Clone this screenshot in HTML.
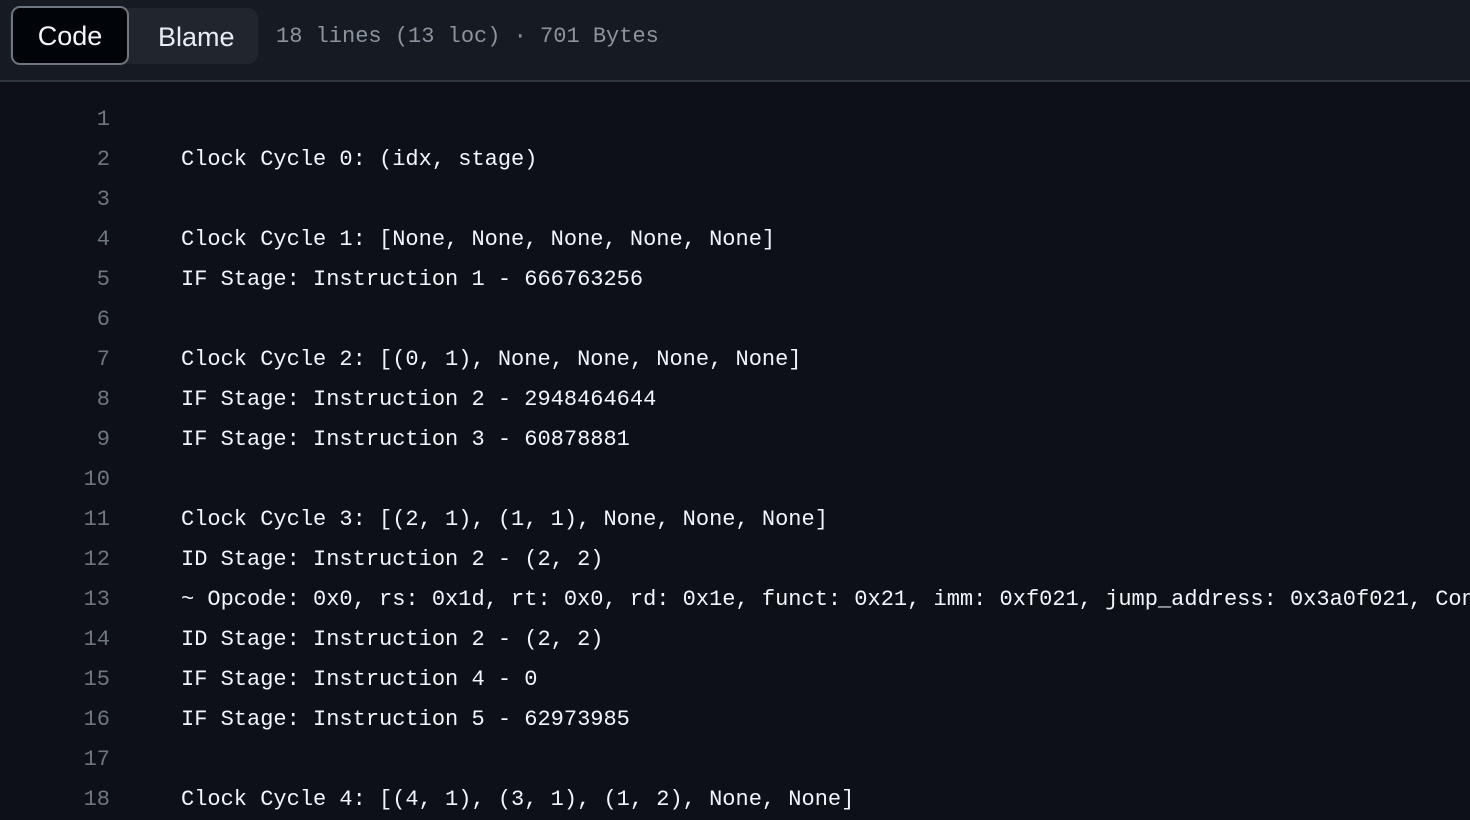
<!DOCTYPE html>
<html><head><style>
html,body{margin:0;padding:0;width:1470px;height:820px;overflow:hidden;background:#0d1117;}
.hdr{position:absolute;left:0;top:0;width:1470px;height:80px;background:#161b22;border-bottom:2px solid #30363d;}
.seg{position:absolute;left:10px;top:8px;width:248px;height:56px;background:#21262d;border-radius:10px;}
.code{position:absolute;left:11px;top:6px;width:118px;height:59px;background:#010409;border:2px solid #6e7681;border-radius:9px;box-sizing:border-box;color:#f0f6fc;font:27px "Liberation Sans",sans-serif;text-align:center;line-height:56px;}
.blame{position:absolute;left:158px;top:8px;height:56px;color:#e6edf3;font:27px "Liberation Sans",sans-serif;line-height:58px;}
.meta{position:absolute;left:276px;top:20px;color:#8b949e;font:22px "Liberation Mono",monospace;line-height:34px;}
.body{position:absolute;left:0;top:100px;font:22px "Liberation Mono",monospace;}
.ln{position:absolute;left:0;width:110px;text-align:right;color:#6e7681;}
.l{height:40px;line-height:40px;position:relative;}
.t{position:absolute;left:181px;color:#f0f6fc;white-space:pre;}
</style></head><body>
<div class="hdr"><div class="seg"></div><div class="code">Code</div><div class="blame">Blame</div><div class="meta">18 lines (13 loc) · 701 Bytes</div></div>
<div class="body">
<div class="l"><span class="ln">1</span><span class="t"></span></div>
<div class="l"><span class="ln">2</span><span class="t">Clock Cycle 0: (idx, stage)</span></div>
<div class="l"><span class="ln">3</span><span class="t"></span></div>
<div class="l"><span class="ln">4</span><span class="t">Clock Cycle 1: [None, None, None, None, None]</span></div>
<div class="l"><span class="ln">5</span><span class="t">IF Stage: Instruction 1 - 666763256</span></div>
<div class="l"><span class="ln">6</span><span class="t"></span></div>
<div class="l"><span class="ln">7</span><span class="t">Clock Cycle 2: [(0, 1), None, None, None, None]</span></div>
<div class="l"><span class="ln">8</span><span class="t">IF Stage: Instruction 2 - 2948464644</span></div>
<div class="l"><span class="ln">9</span><span class="t">IF Stage: Instruction 3 - 60878881</span></div>
<div class="l"><span class="ln">10</span><span class="t"></span></div>
<div class="l"><span class="ln">11</span><span class="t">Clock Cycle 3: [(2, 1), (1, 1), None, None, None]</span></div>
<div class="l"><span class="ln">12</span><span class="t">ID Stage: Instruction 2 - (2, 2)</span></div>
<div class="l"><span class="ln">13</span><span class="t">~ Opcode: 0x0, rs: 0x1d, rt: 0x0, rd: 0x1e, funct: 0x21, imm: 0xf021, jump_address: 0x3a0f021, Control</span></div>
<div class="l"><span class="ln">14</span><span class="t">ID Stage: Instruction 2 - (2, 2)</span></div>
<div class="l"><span class="ln">15</span><span class="t">IF Stage: Instruction 4 - 0</span></div>
<div class="l"><span class="ln">16</span><span class="t">IF Stage: Instruction 5 - 62973985</span></div>
<div class="l"><span class="ln">17</span><span class="t"></span></div>
<div class="l"><span class="ln">18</span><span class="t">Clock Cycle 4: [(4, 1), (3, 1), (1, 2), None, None]</span></div>
</div>
</body></html>
